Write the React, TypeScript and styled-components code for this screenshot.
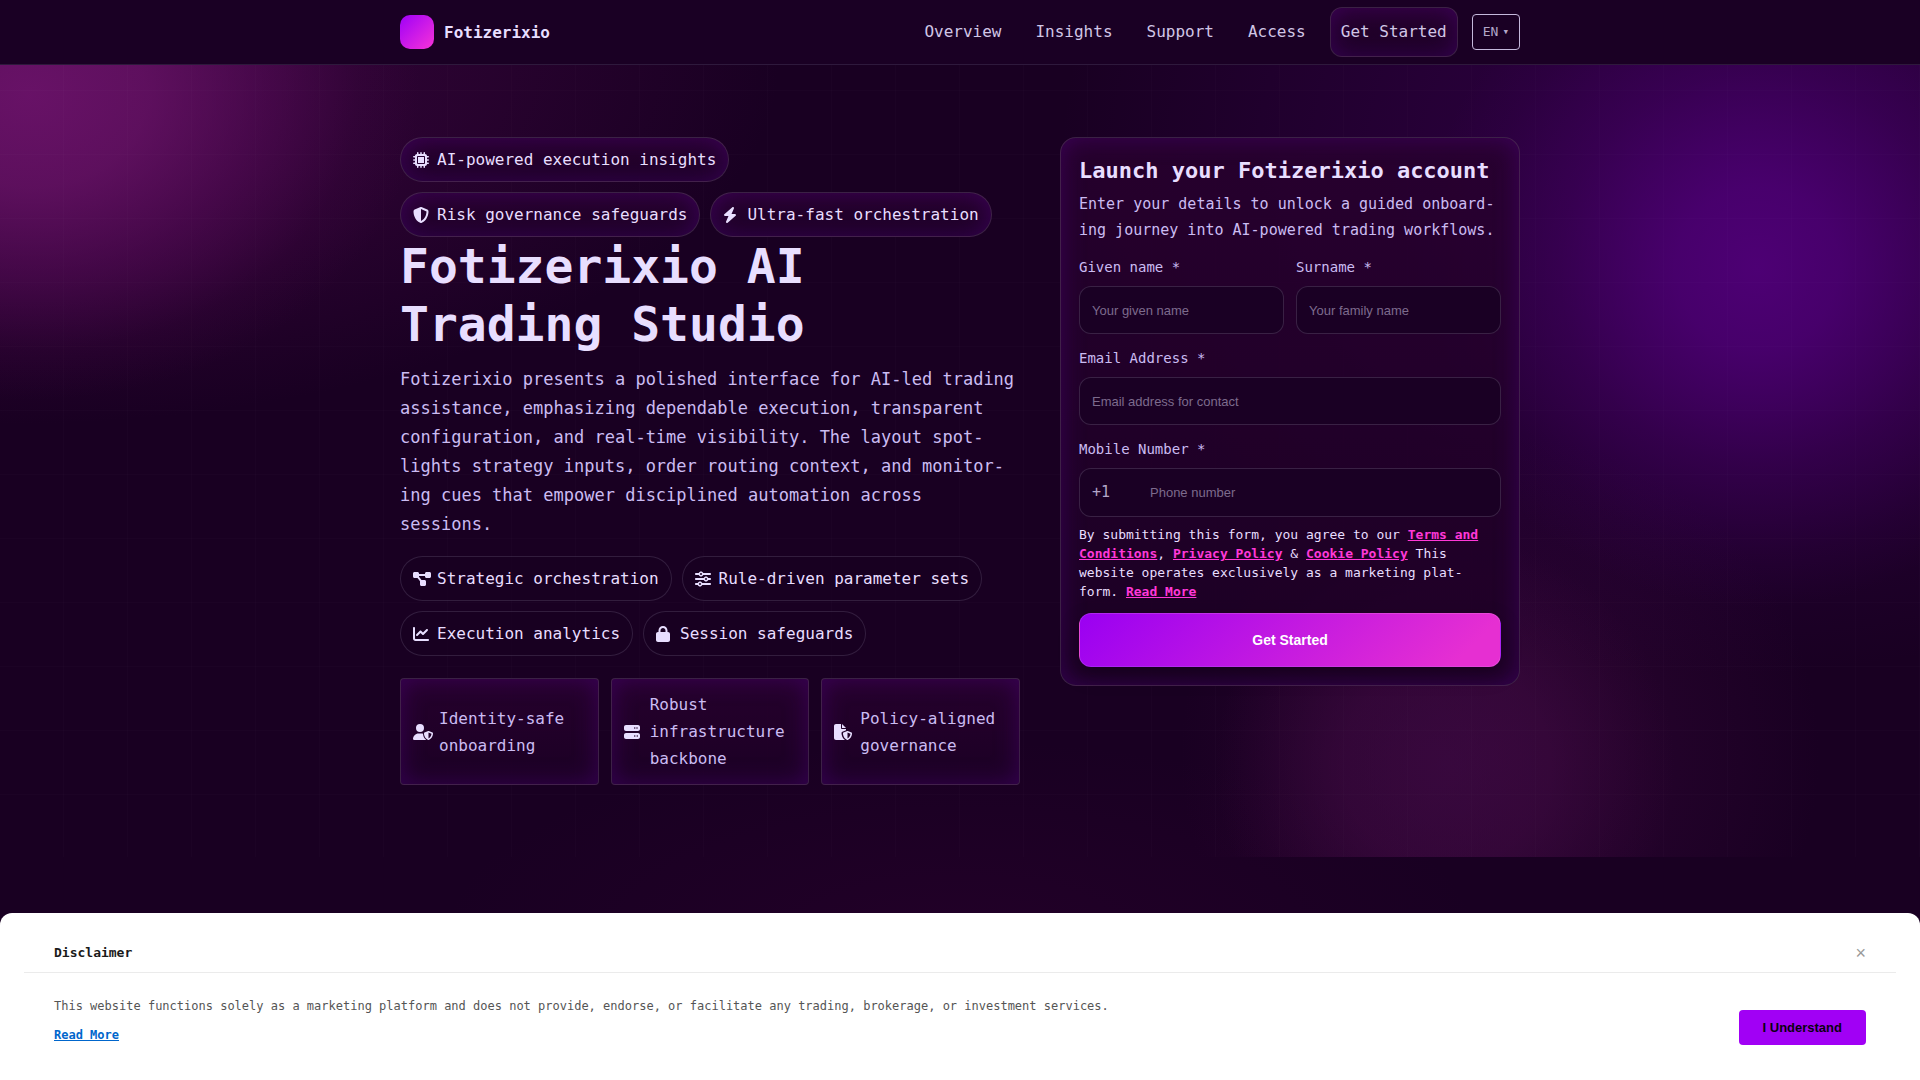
import React from "react";
import styled, { createGlobalStyle, css } from "styled-components";
import {
  FaMicrochip,
  FaBolt,
  FaDiagramProject,
  FaSliders,
  FaChartLine,
  FaLock,
  FaUserShield,
  FaServer,
  FaShieldHalved,
} from "react-icons/fa6";

const mono = `"DejaVu Sans Mono", "Liberation Mono", monospace`;
const sans = `"Liberation Sans", Arial, sans-serif`;

const GlobalStyle = createGlobalStyle`
  *, *::before, *::after { box-sizing: border-box; }
  body {
    margin: 0;
    min-height: 100vh;
    background:
      radial-gradient(ellipse 520px 200px at 50% 940px, rgba(80, 0, 70, 0.16), transparent),
      #190022;
    color: #e8deff;
    font-family: ${mono};
    font-size: 16px;
    line-height: 27px;
  }
  h1, h2, p, ul { margin: 0; padding: 0; }
`;

const glow = css`
  background: linear-gradient(180deg, rgba(40, 0, 46, 0.85), rgba(29, 0, 37, 0.85));
  border: 1px solid rgba(232, 222, 255, 0.15);
  box-shadow: inset 0 0 24px rgba(90, 0, 150, 0.4);
`;

const Container = styled.div`
  width: 100%;
  max-width: 1168px;
  margin: 0 auto;
  padding: 0 24px;
`;

const Header = styled.header`
  position: sticky;
  top: 0;
  z-index: 5;
  padding: 7px 0;
  background: #1a0024;
  border-bottom: 1px solid #2e193c;
`;

const HeaderRow = styled(Container)`
  display: flex;
  align-items: center;
  justify-content: space-between;
`;

const Brand = styled.a`
  display: flex;
  align-items: center;
  gap: 10px;
  color: #e8deff;
  font-weight: 700;
  text-decoration: none;
`;

const BrandMark = styled.span`
  width: 34px;
  height: 34px;
  border-radius: 10px;
  background: linear-gradient(135deg, #9f00f8, #f733d8);
`;

const Nav = styled.nav`
  display: flex;
  align-items: center;
  gap: 14px;
`;

const NavLink = styled.a<{ $boxed?: boolean }>`
  padding: 10px;
  color: #d1c6e6;
  line-height: 28px;
  text-decoration: none;
  border-radius: 12px;
  ${({ $boxed }) => $boxed && glow}
`;

const LangButton = styled.button`
  display: flex;
  align-items: center;
  gap: 4px;
  height: 36px;
  padding: 0 10px;
  border: 1px solid #c5b9dc;
  border-radius: 4px;
  background: transparent;
  color: #b3a6c9;
  font: 13px/20px ${mono};
`;

const Caret = styled.span`
  font-size: 11px;
`;

const Hero = styled.section`
  position: relative;
  overflow: hidden;
  padding: 72px 0;
  background:
    linear-gradient(90deg, transparent 63px, rgba(255, 255, 255, 0.01) 63px) 0 0 / 64px 64px,
    linear-gradient(180deg, transparent 63px, rgba(255, 255, 255, 0.01) 63px) 0 26px / 64px 64px,
    radial-gradient(ellipse 390px 305px at 30px 30px, rgba(112, 20, 110, 0.85), rgba(110, 20, 108, 0.72) 30%, rgba(105, 15, 105, 0.42) 58%, rgba(90, 10, 90, 0.12) 84%, transparent),
    radial-gradient(ellipse 780px 360px at 0 0, rgba(90, 10, 90, 0.5), rgba(80, 8, 80, 0.28) 60%, transparent),
    radial-gradient(circle 340px at calc(100% - 163px) 203px, rgba(86, 0, 130, 0.8), rgba(84, 0, 128, 0.7) 24%, rgba(80, 0, 120, 0.35) 58%, rgba(80, 0, 120, 0.1) 84%, transparent),
    radial-gradient(ellipse 680px 520px at calc(100% - 180px) 90px, rgba(80, 0, 120, 0.36), rgba(80, 0, 120, 0.24) 45%, transparent),
    radial-gradient(circle 230px at calc(50% + 485px) 700px, rgba(70, 12, 75, 0.55), rgba(70, 12, 72, 0.45) 45%, rgba(70, 10, 70, 0.12) 84%, transparent),
    radial-gradient(circle 320px at calc(50% + 540px) 690px, rgba(70, 10, 70, 0.35), rgba(70, 10, 70, 0.2) 55%, transparent);
`;

const HeroGrid = styled(Container)`
  display: grid;
  grid-template-columns: 31fr 23fr;
  align-items: start;
  gap: 40px;
`;

const PillList = styled.ul`
  display: flex;
  flex-wrap: wrap;
  gap: 10px;
  list-style: none;
`;

const Pill = styled.li<{ $glow?: boolean }>`
  display: flex;
  align-items: center;
  gap: 6px;
  padding: 8px 12px;
  border: 1px solid rgba(232, 222, 255, 0.13);
  border-radius: 24px;
  background: rgba(24, 0, 34, 0.6);
  ${({ $glow }) => $glow && glow}
`;

const IconBox = styled.span<{ $width: number }>`
  flex: none;
  display: flex;
  width: 18px;
  color: #e8deff;
  svg {
    flex: none;
    width: ${({ $width }) => $width}px;
    height: 16px;
  }
`;

const Title = styled.h1`
  max-width: 520px;
  margin-bottom: 12px;
  font-size: 48px;
  line-height: 58px;
`;

const Lead = styled.p`
  margin-bottom: 17px;
  color: #cbbcf2;
  font-size: 17px;
  line-height: 29px;
`;

const Features = styled.ul`
  display: grid;
  grid-template-columns: repeat(3, 1fr);
  gap: 12px;
  margin-top: 22px;
  list-style: none;
`;

const Feature = styled.li`
  display: flex;
  align-items: center;
  gap: 8px;
  padding: 12px;
  color: #cbbcf2;
  border-radius: 4px;
  ${glow}
`;

const Card = styled.form`
  padding: 18px;
  border-radius: 16px;
  ${glow}
`;

const CardTitle = styled.h2`
  margin-bottom: 5px;
  font-size: 22px;
  line-height: 30px;
`;

const CardText = styled.p`
  margin-bottom: 12px;
  color: #cbbcf2;
  font-size: 15px;
  line-height: 26px;
`;

const Fields = styled.div`
  display: grid;
  grid-template-columns: 1fr 1fr;
  gap: 12px;
`;

const Field = styled.div<{ $wide?: boolean }>`
  display: grid;
  gap: 6px;
  grid-column: ${({ $wide }) => ($wide ? "1 / -1" : "auto")};
`;

const Label = styled.label`
  color: #cbbcf2;
  font-size: 14px;
  line-height: 25px;
`;

const box = css`
  height: 48px;
  border: 1px solid rgba(232, 222, 255, 0.15);
  border-radius: 12px;
  background: #1a0024;
`;

const Input = styled.input`
  width: 100%;
  min-width: 0;
  padding: 0 12px;
  color: #e8deff;
  font: 13px/20px ${sans};
  outline: none;
  ${box}
  &::placeholder { color: #7d6b8d; opacity: 1; }
`;

const PhoneBox = styled.div`
  display: flex;
  align-items: center;
  ${box}
  height: 49px;
`;

const Prefix = styled.span`
  flex: none;
  width: 58px;
  padding-left: 12px;
  color: #b3a6c9;
  font-size: 15px;
`;

const PhoneInput = styled(Input)`
  border: 0;
  height: 100%;
  background: transparent;
`;

const Consent = styled.p`
  margin: 8px 0 12px;
  padding-right: 12px;
  font-size: 13px;
  line-height: 19px;
  a { color: #ff38d8; font-weight: 700; text-decoration: underline; }
`;

const Submit = styled.button`
  display: block;
  width: 100%;
  height: 54px;
  border: 1px solid rgba(232, 222, 255, 0.15);
  border-radius: 12px;
  background: linear-gradient(135deg, #9a00f2, #e62fd2 90%);
  box-shadow: 0 8px 20px rgba(0, 0, 0, 0.25);
  color: #fff;
  font: 700 14px/20px ${sans};
`;

const Notice = styled.aside`
  position: fixed;
  right: 0;
  bottom: 0;
  left: 0;
  z-index: 10;
  padding: 0 24px;
  border-radius: 12px 12px 0 0;
  background: #fff;
`;

const NoticeHead = styled.div`
  display: flex;
  align-items: center;
  justify-content: space-between;
  padding: 27px 30px 6px;
  border-bottom: 1px solid #ebebeb;
`;

const NoticeTitle = styled.h2`
  color: #1a1a1a;
  font-size: 13px;
  line-height: 26px;
`;

const CloseButton = styled.button`
  padding: 0;
  border: 0;
  background: transparent;
  color: #999;
  font: 18px/26px ${sans};
`;

const NoticeBody = styled.div`
  display: flex;
  align-items: flex-end;
  justify-content: space-between;
  gap: 24px;
  padding: 24px 30px 35px;
`;

const NoticeText = styled.div`
  display: grid;
  justify-items: start;
  gap: 10px;
  color: #555;
  font-size: 12px;
  line-height: 19px;
  a { color: #0066cc; font-weight: 700; text-decoration: underline; }
`;

const AcceptButton = styled.button`
  flex: none;
  height: 35px;
  padding: 0 24px;
  border: 0;
  border-radius: 4px;
  background: #a100f5;
  color: #0a0010;
  font: 700 13px/20px ${sans};
`;

/* Document with a small shield at its lower right corner */
const FileShield = () => (
  <svg viewBox="0 0 576 512" fill="currentColor" aria-hidden="true">
    <path d="M0 64C0 28.700 28.700 0 64 0H224V128c0 17.700 14.300 32 32 32H384v38.600l-117.200 46.800C248.900 252.600 240 270 240 288c0 78 30 166 110 222-1 2 0 2-16 2H64c-35.300 0-64-28.700-64-64V64zm384 64H256V0L384 128zm39.100 97.700c5.700-2.300 12.100-2.300 17.800 0l120 48C570 277.400 576 286.200 576 296c0 63.300-25.900 168.800-134.800 214.200-5.900 2.500-12.600 2.500-18.500 0C313.900 464.800 288 359.300 288 296c0-9.800 6-18.600 15.100-22.300l120-48zM527.400 312L432 273.800V461.700c68.200-33 91.500-99 95.400-149.700z" />
  </svg>
);

type Item = { icon: React.ReactNode; width: number; text: string };

const badges: Item[] = [
  { icon: <FaMicrochip />, width: 16, text: "AI-powered execution insights" },
  { icon: <FaShieldHalved />, width: 16, text: "Risk governance safeguards" },
  { icon: <FaBolt />, width: 14, text: "Ultra-fast orchestration" },
];

const capabilities: Item[] = [
  { icon: <FaDiagramProject />, width: 18, text: "Strategic orchestration" },
  { icon: <FaSliders />, width: 16, text: "Rule-driven parameter sets" },
  { icon: <FaChartLine />, width: 16, text: "Execution analytics" },
  { icon: <FaLock />, width: 14, text: "Session safeguards" },
];

const features: Item[] = [
  { icon: <FaUserShield />, width: 20, text: "Identity-safe onboarding" },
  { icon: <FaServer />, width: 16, text: "Robust infrastructure backbone" },
  { icon: <FileShield />, width: 18, text: "Policy-aligned governance" },
];

/* Soft hyphens mark where long words may break at the end of a line */
const leadText =
  "Fotizerixio presents a polished interface for AI-led trading assistance, emphasizing " +
  "dependable execution, transparent configuration, and real-time visibility. The layout " +
  "spot\u00ADlights strategy inputs, order routing context, and monitor\u00ADing cues that " +
  "empower disciplined automation across sessions.";

const cardText =
  "Enter your details to unlock a guided onboard\u00ADing journey into AI-powered trading workflows.";

const operatorText = " This website operates exclusively as a marketing plat\u00ADform. ";

const Pills = ({ items, glow: lit }: { items: Item[]; glow?: boolean }) => (
  <PillList>
    {items.map(({ icon, width, text }) => (
      <Pill key={text} $glow={lit}>
        <IconBox $width={width}>{icon}</IconBox>
        {text}
      </Pill>
    ))}
  </PillList>
);

export default function App() {
  return (
    <>
      <GlobalStyle />
      <Header>
        <HeaderRow>
          <Brand href="#">
            <BrandMark />
            Fotizerixio
          </Brand>
          <Nav>
            <NavLink href="#overview">Overview</NavLink>
            <NavLink href="#insights">Insights</NavLink>
            <NavLink href="#support">Support</NavLink>
            <NavLink href="#access">Access</NavLink>
            <NavLink href="#start" $boxed>Get Started</NavLink>
            <LangButton type="button">
              EN<Caret>▾</Caret>
            </LangButton>
          </Nav>
        </HeaderRow>
      </Header>

      <main>
        <Hero>
          <HeroGrid>
            <div>
              <Pills items={badges} glow />
              <Title>Fotizerixio AI Trading Studio</Title>
              <Lead>{leadText}</Lead>
              <Pills items={capabilities} />
              <Features>
                {features.map(({ icon, width, text }) => (
                  <Feature key={text}>
                    <IconBox $width={width}>{icon}</IconBox>
                    {text}
                  </Feature>
                ))}
              </Features>
            </div>

            <Card id="start">
              <CardTitle>Launch your Fotizerixio account</CardTitle>
              <CardText>{cardText}</CardText>
              <Fields>
                <Field>
                  <Label htmlFor="given">Given name *</Label>
                  <Input id="given" type="text" placeholder="Your given name" />
                </Field>
                <Field>
                  <Label htmlFor="family">Surname *</Label>
                  <Input id="family" type="text" placeholder="Your family name" />
                </Field>
                <Field $wide>
                  <Label htmlFor="email">Email Address *</Label>
                  <Input id="email" type="email" placeholder="Email address for contact" />
                </Field>
                <Field $wide>
                  <Label htmlFor="phone">Mobile Number *</Label>
                  <PhoneBox>
                    <Prefix>+1</Prefix>
                    <PhoneInput id="phone" type="tel" placeholder="Phone number" />
                  </PhoneBox>
                </Field>
              </Fields>
              <Consent>
                By submitting this form, you agree to our <a href="#terms">Terms and Conditions</a>,{" "}
                <a href="#privacy">Privacy Policy</a> &amp; <a href="#cookies">Cookie Policy</a>
                {operatorText}
                <a href="#more">Read More</a>
              </Consent>
              <Submit type="submit">Get Started</Submit>
            </Card>
          </HeroGrid>
        </Hero>
      </main>

      <Notice>
        <NoticeHead>
          <NoticeTitle>Disclaimer</NoticeTitle>
          <CloseButton type="button" aria-label="Close">×</CloseButton>
        </NoticeHead>
        <NoticeBody>
          <NoticeText>
            <p>
              This website functions solely as a marketing platform and does not provide, endorse, or
              facilitate any trading, brokerage, or investment services.
            </p>
            <a href="#more">Read More</a>
          </NoticeText>
          <AcceptButton type="button">I Understand</AcceptButton>
        </NoticeBody>
      </Notice>
    </>
  );
}
